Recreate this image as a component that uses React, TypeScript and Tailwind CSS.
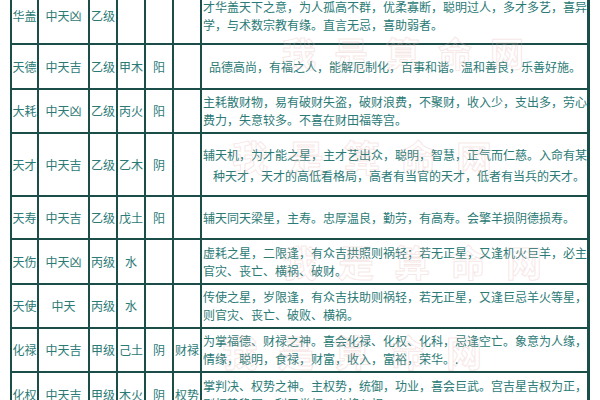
const rows = [
  {
    name: "华盖",
    kind: "中天凶",
    level: "乙级",
    wuxing: "",
    yinyang: "",
    tag: "",
    h: "h-[56px]",
    lines: ["才华盖天下之意，为人孤高不群，优柔寡断，聪明过人，多才多艺，喜异", "学，与术数宗教有缘。直言无忌，喜助弱者。"],
  },
  {
    name: "天德",
    kind: "中天吉",
    level: "乙级",
    wuxing: "甲木",
    yinyang: "阳",
    tag: "",
    h: "h-[45px]",
    lines: ["\u3000品德高尚，有福之人，能解厄制化，百事和谐。温和善良，乐善好施。"],
    indent: true,
  },
  {
    name: "大耗",
    kind: "中天凶",
    level: "乙级",
    wuxing: "丙火",
    yinyang: "阳",
    tag: "",
    h: "h-[44px]",
    lines: ["主耗散财物，易有破财失盗，破财浪费，不聚财，收入少，支出多，劳心", "费力，失意较多。不喜在财田福等宫。"],
  },
  {
    name: "天才",
    kind: "中天吉",
    level: "乙级",
    wuxing: "乙木",
    yinyang: "阴",
    tag: "",
    h: "h-[63px]",
    tall: true,
    lines: ["辅天机，为才能之星，主才艺出众，聪明，智慧，正气而仁慈。入命有某", "\u3000种天才，天才的高低看格局，高者有当官的天才，低者有当兵的天才。"],
  },
  {
    name: "天寿",
    kind: "中天吉",
    level: "乙级",
    wuxing: "戊土",
    yinyang: "阳",
    tag: "",
    h: "h-[43px]",
    lines: ["辅天同天梁星，主寿。忠厚温良，勤劳，有高寿。会擎羊损阴德损寿。"],
  },
  {
    name: "天伤",
    kind: "中天凶",
    level: "丙级",
    wuxing: "水",
    yinyang: "",
    tag: "",
    h: "h-[45px]",
    lines: ["虚耗之星，二限逢，有众吉拱照则祸轻；若无正星，又逢机火巨羊，必主", "官灾、丧亡、横祸、破财。"],
  },
  {
    name: "天使",
    kind: "中天",
    level: "丙级",
    wuxing: "水",
    yinyang: "",
    tag: "",
    h: "h-[44px]",
    lines: ["传使之星，岁限逢，有众吉扶助则祸轻，若无正星，又逢巨忌羊火等星，", "则官灾、丧亡、破败、横祸。"],
  },
  {
    name: "化禄",
    kind: "中天吉",
    level: "甲级",
    wuxing: "己土",
    yinyang: "阴",
    tag: "财禄",
    h: "h-[44px]",
    lines: ["为掌福德、财禄之神。喜会化禄、化权、化科，忌逢空亡。象意为人缘，", "情缘，聪明，食禄，财富，收入，富裕，荣华。."],
  },
  {
    name: "化权",
    kind: "中天吉",
    level: "甲级",
    wuxing: "木火",
    yinyang: "阴",
    tag: "权势",
    h: "h-[46px]",
    lines: ["掌判决、权势之神。主权势，统御，功业，喜会巨武。宫吉星吉权为正，", "则权势稳固，利于掌权，出将入相。"],
  },
];

function Cell({ children }: { children?: React.ReactNode }) {
  return (
    <div className="flex items-center justify-center border-r-2 border-[#1b4d49] whitespace-nowrap">
      {children}
    </div>
  );
}

export default function App() {
  return (
    <div
      className="w-[600px] h-[400px] overflow-hidden bg-white text-[12px] text-[#2b7a76]"
      style={{ fontFamily: '"Noto Sans CJK SC", "Noto Sans", sans-serif' }}
    >
      <div className="relative ml-[10px] -mt-[11px] w-[580px] border-l-2 border-[#1b4d49]">
        {rows.map((r) => (
          <div
            key={r.name}
            className={`grid grid-cols-[27px_51px_28px_28px_28px_28px_388px] border-b-2 border-[#1b4d49] ${r.h}`}
          >
            <Cell>{r.name}</Cell>
            <Cell>{r.kind}</Cell>
            <Cell>{r.level}</Cell>
            <Cell>{r.wuxing}</Cell>
            <Cell>{r.yinyang}</Cell>
            <Cell>{r.tag}</Cell>
            <div
              className={`flex flex-col justify-center pl-[1px] border-r-[3px] border-[#1b4d49] ${
                r.tall ? "leading-[21px]" : "leading-[18px]"
              }`}
            >
              {r.lines.map((l, i) => (
                <div key={i} className={`whitespace-nowrap ${r.indent ? "-ml-[4px]" : ""}`}>
                  {l.startsWith("\u3000") ? <span className="inline-block w-[10px]" /> : null}
                  {l.replace("\u3000", "")}
                </div>
              ))}
            </div>
          </div>
        ))}

        {/* faint watermark */}
        <div className="pointer-events-none absolute left-[270px] top-[38px] text-[34px] font-bold tracking-[18px] text-transparent opacity-30 [-webkit-text-stroke:1px_#e8b4b4]">
          我是算命网
        </div>
        <div className="pointer-events-none absolute left-[220px] top-[140px] text-[36px] font-bold tracking-[20px] text-transparent opacity-30 [-webkit-text-stroke:1px_#e8b4b4]">
          我是算命网
        </div>
        <div className="pointer-events-none absolute left-[270px] top-[245px] text-[36px] font-bold tracking-[20px] text-transparent opacity-30 [-webkit-text-stroke:1px_#e8b4b4]">
          我是算命网
        </div>
        <div className="pointer-events-none absolute left-[210px] top-[335px] text-[36px] font-bold tracking-[20px] text-transparent opacity-30 [-webkit-text-stroke:1px_#e8b4b4]">
          我是算命网
        </div>
      </div>
    </div>
  );
}
